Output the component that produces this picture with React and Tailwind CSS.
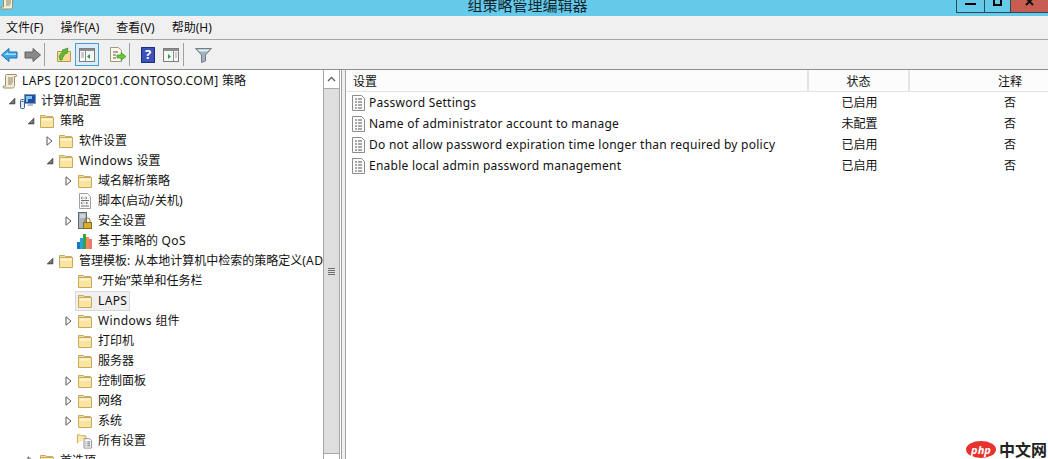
import React from "react";

const FONT = '"Noto Sans","Noto Sans CJK SC",sans-serif';

const Folder = ({ className = "" }) => (
  <svg width="16" height="16" viewBox="0 0 16 16" className={className}>
    <path d="M1.500 4.500V2.500h5l1 1h6v2" fill="#f3dd9b" stroke="#c8a960" />
    <path d="M1.500 14.500V4.500h13v10z" fill="#fbe3a0" stroke="#c8a960" />
    <path d="M2.500 5.500h11v2h-11z" fill="#fff6d6" />
  </svg>
);

const Scroll = () => (
  <svg width="16" height="16" viewBox="0 0 16 16">
    <path d="M4.500 1.500h9.500c1 0 1 2 0 2h-1.500v9c0 2-1 2.500-2 2.500H2c-1.500 0-1.500-2 0-2h1.500v-10c0-1 .5-1.500 1-1.500z" fill="#f6edd2" stroke="#9a8f72" />
    <path d="M6 5h5M6 7h5M6 9h5M6 11h4" stroke="#8a8270" strokeWidth="1" />
  </svg>
);

const Computer = () => (
  <svg width="16" height="16" viewBox="0 0 16 16">
    <rect x="4.500" y="1.500" width="11" height="9" fill="#1c4fa8" stroke="#8a9ab0" />
    <path d="M6 3h6v3H8v3H6z" fill="#7fc4ef" />
    <path d="M8 11h5v2H7z" fill="#b8bec6" />
    <rect x="0.500" y="6.500" width="4" height="9" rx="1" fill="#e5eaf0" stroke="#3a5f96" />
    <rect x="1.500" y="8" width="2" height="1" fill="#3a5f96" />
  </svg>
);

const Script = () => (
  <svg width="16" height="16" viewBox="0 0 16 16">
    <path d="M2.500.5h8l3 3v12h-11z" fill="#fafafa" stroke="#a0a0a0" />
    <path d="M4 5l1.500-1M4 5l1.500 1M8.500 4l1.500 1-1.500 1M4 10l1.500-1M4 10l1.500 1M9 9l1.500 1L9 11M6.500 5h1M6.500 10h1M4 13h8M4 7.500h8" stroke="#707070" fill="none" />
  </svg>
);

const Security = () => (
  <svg width="16" height="18" viewBox="0 0 16 18">
    <rect x="1.500" y="0.500" width="8" height="16" fill="#a9b4be" stroke="#5f6b75" />
    <path d="M3 3h5M3 5h5" stroke="#eef2f5" />
    <path d="M8 10V8.500a2.500 2.500 0 015 0V10" fill="none" stroke="#8a6d1c" />
    <rect x="6.500" y="10.500" width="8" height="6" fill="#dcaa2c" stroke="#8a6d1c" />
  </svg>
);

const Qos = () => (
  <svg width="16" height="16" viewBox="0 0 16 16">
    <rect x="0" y="9" width="3" height="7" fill="#1f76c8" />
    <rect x="3" y="5" width="3" height="11" fill="#2aa0dc" />
    <rect x="6" y="1" width="3" height="15" fill="#35a24a" />
    <rect x="9" y="4" width="3" height="12" fill="#f08a5a" />
    <rect x="12" y="6" width="3" height="10" fill="#ee7a6a" />
  </svg>
);

const AllSettings = () => (
  <svg width="18" height="18" viewBox="0 0 18 18">
    <path d="M1.500 11.500v-9h3l1 1h5v3" fill="#fbe9ae" stroke="#c8a960" />
    <path d="M8.500 6.500h6l2 2v8h-8z" fill="#fafafa" stroke="#8f8f8f" />
    <path d="M10 10h1M12 10h3M10 12h1M12 12h3M10 14h1M12 14h3" stroke="#606060" />
  </svg>
);

const Policy = () => (
  <svg width="13" height="16" viewBox="0 0 13 16" className="shrink-0">
    <path d="M.5.5h9l3 3v12H.5z" fill="#fcfcfc" stroke="#8c8c8c" />
    <path d="M3 4h2M6 4h4M3 7h2M6 7h4M3 10h2M6 10h4M3 13h2M6 13h4" stroke="#555" />
  </svg>
);

const Open = () => (
  <svg width="8" height="8" viewBox="0 0 8 8">
    <path d="M7 1v6H1z" fill="#595959" stroke="#595959" strokeWidth="0.6" />
    <path d="M5.500 3.500v2h-2z" fill="#a6a6a6" />
  </svg>
);

const Closed = () => (
  <svg width="7" height="10" viewBox="0 0 7 10">
    <path d="M1 .8v8.400L6 5z" fill="#fff" stroke="#555" />
  </svg>
);

const rows = [
  ["pl-[0px]", null, <Scroll />, "LAPS [2012DC01.CONTOSO.COM] 策略", ""],
  ["pl-[4px]", "o", <Computer />, "计算机配置", ""],
  ["pl-[23px]", "o", <Folder />, "策略", ""],
  ["pl-[42px]", "c", <Folder />, "软件设置", ""],
  ["pl-[42px]", "o", <Folder />, "Windows 设置", ""],
  ["pl-[61px]", "c", <Folder />, "域名解析策略", ""],
  ["pl-[61px]", null, <Script />, "脚本(启动/关机)", ""],
  ["pl-[61px]", "c", <Security />, "安全设置", ""],
  ["pl-[61px]", null, <Qos />, "基于策略的 QoS", ""],
  ["pl-[42px]", "o", <Folder />, "管理模板: 从本地计算机中检索的策略定义(ADMX 文件)", ""],
  ["pl-[61px]", null, <Folder />, "“开始”菜单和任务栏", ""],
  ["pl-[61px]", null, <Folder />, "LAPS", "sel"],
  ["pl-[61px]", "c", <Folder />, "Windows 组件", ""],
  ["pl-[61px]", null, <Folder />, "打印机", ""],
  ["pl-[61px]", null, <Folder />, "服务器", ""],
  ["pl-[61px]", "c", <Folder />, "控制面板", ""],
  ["pl-[61px]", "c", <Folder />, "网络", ""],
  ["pl-[61px]", "c", <Folder />, "系统", ""],
  ["pl-[61px]", null, <AllSettings />, "所有设置", ""],
  ["pl-[23px]", "c", <Folder />, "首选项", ""],
];

const policies = [
  ["Password Settings", "已启用", "否"],
  ["Name of administrator account to manage", "未配置", "否"],
  ["Do not allow password expiration time longer than required by policy", "已启用", "否"],
  ["Enable local admin password management", "已启用", "否"],
];

// Latin runs are set slightly wider than the CJK runs in the reference.
function Mixed({ text }) {
  return text.split(/([\x00-\x7f]+)/).map((part, i) =>
    /[\x00-\x7f]/.test(part) ? (
      <span key={i} className="tracking-[0.38px]">
        {part}
      </span>
    ) : (
      part
    )
  );
}

function TreeRow({ pad, arrow, icon, label, state, isRoot }) {
  return (
    <div className={`flex h-5 shrink-0 items-center whitespace-nowrap ${pad}`}>
      {!isRoot && (
        <span className="flex w-[15px] shrink-0 items-center justify-center">
          {arrow === "o" && <Open />}
          {arrow === "c" && <Closed />}
        </span>
      )}
      <span
        className={`flex h-5 items-center border ${
          state === "sel" ? "border-[#d9d9d9] bg-[#f0f0f0]" : "border-transparent"
        } ${isRoot ? "" : "ml-[-1px]"}`}
      >
        <span className={`flex w-[17px] shrink-0 items-center justify-center ${isRoot ? "mr-[4px]" : "mr-[5px]"}`}>
          {icon}
        </span>
        <span className="pr-[2px] leading-[18px]">
          <Mixed text={label} />
        </span>
      </span>
    </div>
  );
}

const Divider = () => <div className="mx-[3px] h-[23px] w-px shrink-0 bg-[#a0a0a0]" />;

export default function App() {
  return (
    <div
      className="flex h-[459px] w-[1048px] flex-col overflow-hidden bg-white text-[12px] text-[#111]"
      style={{ fontFamily: FONT }}
    >
      {/* Title bar */}
      <div className="relative flex h-4 shrink-0 items-start justify-center overflow-hidden bg-[#65c9ea] pl-[7px]">
        <div className="absolute left-0 top-[-6px]">
          <Scroll />
        </div>
        <span className="mt-[-5px] text-[15px] leading-5 text-[#10242c]">组策略管理编辑器</span>
        <div className="absolute right-0 top-0 flex h-[13px] items-start">
          <div className="flex h-[13px] w-[28px] items-start justify-center border-b border-l border-[#2c4a58]">
            <div className="mt-[3px] h-[2px] w-[11px] bg-black" />
          </div>
          <div className="flex h-[13px] w-[26px] items-start justify-center border-b border-l border-[#2c4a58]">
            <div className="mt-[-4px] h-[10px] w-[9px] border-2 border-black" />
          </div>
          <div className="flex h-[13px] w-[38px] items-start justify-center overflow-hidden border-b border-l border-[#2c4a58] bg-[#c75c50]">
            <svg width="10" height="6" viewBox="0 0 10 6">
              <path d="M1 -2L8 5M8 -2L1 5" stroke="#111" strokeWidth="2" />
            </svg>
          </div>
        </div>
      </div>

      {/* Menu */}
      <div className="flex h-6 shrink-0 items-center gap-[17px] border-b border-[#a6a6a6] bg-[#f0f0f0] pl-[6px]">
        <span>文件(F)</span>
        <span>操作(A)</span>
        <span>查看(V)</span>
        <span>帮助(H)</span>
      </div>

      {/* Toolbar */}
      <div className="flex h-[30px] shrink-0 items-center border-b border-[#8f8f8f] bg-[#f0f0f0] pl-[1px]">
        <svg width="17" height="16" viewBox="0 0 17 16" className="mr-[6px]">
          <path d="M.5 8L8 1.500V5h8v6H8v3.500z" fill="#3ca8e8" stroke="#1f6fb0" />
          <path d="M3 8l4-3v1.500h8V8z" fill="#a5dcf8" />
        </svg>
        <svg width="17" height="16" viewBox="0 0 17 16">
          <path d="M16.500 8L9 1.500V5H1v6h8v3.500z" fill="#8a8a8a" stroke="#606060" />
        </svg>
        <Divider />
        <svg width="16" height="16" viewBox="0 0 16 16" className="ml-[8px] mr-[3px]">
          <path d="M1.500 14.500v-10h13v10z" fill="#f8dc94" stroke="#b9994f" />
          <path d="M3 9l4-5-1-1 6-2-1 6-1-1-3 4-1 3H4z" fill="#5fb637" stroke="#3c8a22" strokeWidth="0.6" />
        </svg>
        <div className="mr-[10px] flex h-[23px] w-[24px] items-center justify-center border border-[#3fa2dc] bg-[#dcecf8]">
          <svg width="16" height="14" viewBox="0 0 16 14">
            <rect x=".5" y=".5" width="15" height="13" fill="#f7f7f7" stroke="#7d7d7d" />
            <path d="M1 1h14v2H1z" fill="#8d8d8d" />
            <path d="M6.500 3v10" stroke="#8d8d8d" />
            <path d="M2 5h3M2 7h3M2 9h3" stroke="#a0a0a0" />
            <path d="M11 6v5L8 8.500z" fill="#2aa040" />
          </svg>
        </div>
        <svg width="18" height="18" viewBox="0 0 18 18" className="mr-[-1px]">
          <path d="M1.500 1.500h8l3 3v11h-11z" fill="#fbf8ea" stroke="#a09a80" />
          <path d="M4 6h5M4 9h3M4 12h3" stroke="#555" />
          <path d="M8 9h4V6.500l5 4-5 4V12H8z" fill="#6cc13e" stroke="#3f9a22" strokeWidth="0.7" />
        </svg>
        <Divider />
        <div className="mx-[8px] flex h-[16px] w-[14px] items-center justify-center border border-[#1c2c88] bg-[#3c52b8] text-[13px] font-bold leading-none text-white">
          ?
        </div>
        <svg width="16" height="14" viewBox="0 0 16 14" className="mr-[1px]">
          <rect x=".5" y=".5" width="15" height="13" fill="#f7f7f7" stroke="#7d7d7d" />
          <path d="M1 1h14v2H1z" fill="#8d8d8d" />
          <path d="M10.500 3v10" stroke="#8d8d8d" />
          <path d="M12 5h2M12 7h2M12 9h2" stroke="#a0a0a0" />
          <path d="M5 6v5l3-2.500z" fill="#2aa040" />
        </svg>
        <Divider />
        <svg width="17" height="16" viewBox="0 0 17 16" className="ml-[8px]">
          <path d="M.5 1.500h16L10.500 8v6l-4 1.500V8z" fill="#9fb2be" stroke="#6e7f8a" />
          <path d="M2.500 2.500h12L12 4.500H5z" fill="#e8eef2" />
        </svg>
      </div>

      {/* Body */}
      <div className="flex min-h-0 flex-1 bg-[#f0f0f0]">
        {/* Tree pane */}
        <div className="flex w-[342px] shrink-0 overflow-hidden border-r border-[#a0a0a0] bg-white">
          <div className="min-w-0 flex-1 overflow-hidden pt-[1px]">
            {rows.map(([pad, arrow, icon, label, state], i) => (
              <TreeRow key={i} pad={pad} arrow={arrow} icon={icon} label={label} state={state} isRoot={i === 0} />
            ))}
          </div>
          {/* Scrollbar */}
          <div className="mr-[1px] flex w-[17px] shrink-0 flex-col border-x border-[#a8a8a8] bg-white">
            <div className="flex h-[18px] shrink-0 items-center justify-center">
              <svg width="9" height="6" viewBox="0 0 9 6">
                <path d="M1 5l3.500-3.500L8 5" fill="none" stroke="#606060" strokeWidth="1.300" />
              </svg>
            </div>
            <div className="flex h-[366px] shrink-0 flex-col items-center justify-center gap-[1px] border-y border-[#a8a8a8] bg-[#dedede]">
              <div className="h-px w-[7px] bg-[#707070]" />
              <div className="h-px w-[7px] bg-[#707070]" />
              <div className="h-px w-[7px] bg-[#707070]" />
              <div className="h-px w-[7px] bg-[#707070]" />
            </div>
          </div>
        </div>

        {/* Right pane */}
        <div className="ml-[3px] flex min-w-0 flex-1 flex-col overflow-hidden border-l border-[#a0a0a0] bg-white">
          <div className="flex h-[22px] shrink-0 border-b border-[#e3e3e3] bg-[#fcfcfc] leading-[23px]">
            <div className="w-[463px] shrink-0 border-r-2 border-[#e3e3e3] pl-[7px]">设置</div>
            <div className="w-[101px] shrink-0 border-r-2 border-[#e3e3e3] text-center">状态</div>
            <div className="w-[200px] shrink-0 text-center">注释</div>
          </div>
          {policies.map(([name, st, note]) => (
            <div key={name} className="flex h-[21px] shrink-0 items-center whitespace-nowrap">
              <div className="flex w-[463px] shrink-0 items-center gap-[4px] pl-[6px] tracking-[0.25px]">
                <Policy />
                <span>{name}</span>
              </div>
              <div className="w-[101px] shrink-0 text-center">{st}</div>
              <div className="w-[200px] shrink-0 text-center">{note}</div>
            </div>
          ))}
          {/* Watermark */}
          <div className="mt-auto flex items-center justify-end pb-[1px] pr-[1px]">
            <span className="flex h-[17px] w-[30px] items-center justify-center rounded-[50%] bg-[#e8322e] text-[11px] font-bold italic leading-none text-white">
              php
            </span>
            <span className="ml-[3px] text-[16px] font-bold leading-4 text-[#222]">中文网</span>
          </div>
        </div>
      </div>
    </div>
  );
}
